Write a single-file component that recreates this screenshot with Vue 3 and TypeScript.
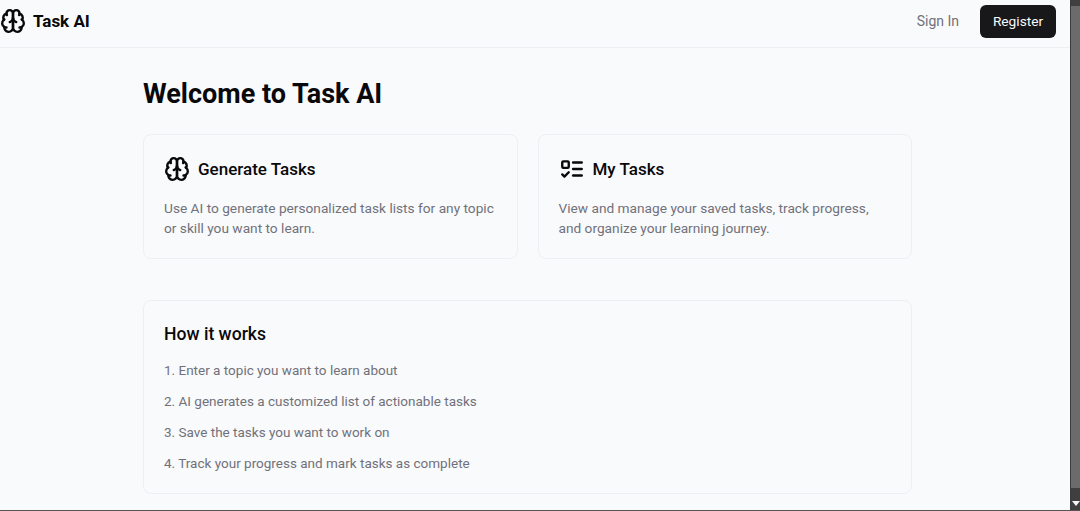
<template>
  <div class="window">
    <div class="viewport">
      <div class="page">
        <header class="topbar">
          <div class="brand">
            <svg class="icon" viewBox="0 0 24 24"><path v-for="d in brainPaths" :key="d" :d="d" /></svg>
            <span class="brand-name">Task AI</span>
          </div>
          <nav class="nav">
            <a class="signin">Sign In</a>
            <button class="register">Register</button>
          </nav>
        </header>

        <main class="content">
          <h1>Welcome to Task AI</h1>

          <div class="cards">
            <section class="card">
              <div class="card-title">
                <svg class="icon" viewBox="0 0 24 24"><path v-for="d in brainPaths" :key="d" :d="d" /></svg>
                <h2>Generate Tasks</h2>
              </div>
              <p>Use AI to generate personalized task lists for any topic or skill you want to learn.</p>
            </section>
            <section class="card">
              <div class="card-title">
                <svg class="icon" viewBox="0 0 24 24">
                  <rect x="3" y="5" width="6" height="6" rx="1" />
                  <path d="m3 17 2 2 4-4" />
                  <path d="M13 6h8" />
                  <path d="M13 12h8" />
                  <path d="M13 18h8" />
                </svg>
                <h2>My Tasks</h2>
              </div>
              <p>View and manage your saved tasks, track progress, and organize your learning journey.</p>
            </section>
          </div>

          <section class="card how">
            <h2>How it works</h2>
            <ol>
              <li v-for="(step, i) in steps" :key="step">{{ i + 1 }}. {{ step }}</li>
            </ol>
          </section>
        </main>
      </div>

      <div class="scrollbar">
        <span class="thumb"></span>
        <span class="arrow-box"><span class="arrow"></span></span>
      </div>
    </div>
    <div class="window-edge"></div>
  </div>
</template>

<script setup lang="ts">
const brainPaths: string[] = [
  'M12 5a3 3 0 1 0-5.997.125 4 4 0 0 0-2.526 5.77 4 4 0 0 0 .556 6.588A4 4 0 1 0 12 18Z',
  'M12 5a3 3 0 1 1 5.997.125 4 4 0 0 1 2.526 5.77 4 4 0 0 1-.556 6.588A4 4 0 1 1 12 18Z',
  'M15 13a4.5 4.5 0 0 1-3-4 4.5 4.5 0 0 1-3 4',
  'M17.599 6.5a3 3 0 0 0 .399-1.375',
  'M6.003 5.125A3 3 0 0 0 6.401 6.5',
  'M3.477 10.896a4 4 0 0 1 .585-.396',
  'M19.938 10.5a4 4 0 0 1 .585.396',
  'M6 18a4 4 0 0 1-1.967-.516',
  'M19.967 17.484A4 4 0 0 1 18 18',
]

const steps: string[] = [
  'Enter a topic you want to learn about',
  'AI generates a customized list of actionable tasks',
  'Save the tasks you want to work on',
  'Track your progress and mark tasks as complete',
]
</script>

<style>
html,
body {
  margin: 0;
  overflow: hidden;
}
</style>

<style scoped>
.window {
  display: flex;
  flex-direction: column;
  width: 1080px;
  height: 511px;
  overflow: hidden;
  background: #f9fafc;
  font-family: Roboto, 'Noto Sans', sans-serif;
  color: #09090b;
}

.viewport {
  display: flex;
  flex: 1;
  min-height: 0;
}

.window-edge {
  height: 1px;
  background: #555;
}

.page {
  flex: 1;
  min-width: 0;
}

.topbar {
  display: flex;
  align-items: center;
  justify-content: space-between;
  height: 47px;
  padding-right: 14px;
  border-bottom: 1px solid #eeeff2;
}

.brand {
  display: flex;
  align-items: center;
  gap: 7px;
  margin-top: -5px;
}

.brand-name {
  font-size: 17px;
  font-weight: 700;
}

.icon {
  width: 26px;
  height: 26px;
  flex: none;
  fill: none;
  stroke: #09090b;
  stroke-width: 2.2;
  stroke-linecap: round;
  stroke-linejoin: round;
}

.nav {
  display: flex;
  align-items: center;
  gap: 21px;
  margin-top: -5px;
}

.signin {
  font-size: 14px;
  color: #71717a;
}

.register {
  height: 33px;
  width: 76px;
  padding: 0;
  border: none;
  border-radius: 6px;
  background: #18181b;
  color: #fafafa;
  font-family: inherit;
  font-size: 13.7px;
}

.content {
  width: 769px;
  margin-left: 143px;
  padding-top: 25px;
}

h1 {
  margin: 0 0 19px;
  font-size: 27px;
  line-height: 42px;
  font-weight: 700;
}

.cards {
  display: grid;
  grid-template-columns: 1fr 1fr;
  gap: 20px;
  margin-bottom: 41px;
}

.card {
  box-sizing: border-box;
  padding: 21px 20px 20px;
  border: 1px solid #eeeff2;
  border-radius: 8px;
}

.card-title {
  display: flex;
  align-items: center;
  gap: 8px;
  margin-bottom: 16px;
}

h2 {
  margin: 0;
  font-size: 17px;
  font-weight: 500;
}

.card p {
  margin: 0;
  font-size: 13.7px;
  line-height: 20px;
  color: #71717a;
}

.how {
  height: 194px;
  padding-top: 19px;
}

.how h2 {
  font-size: 17.6px;
  line-height: 28px;
}

ol {
  list-style: none;
  margin: 12px 0 0;
  padding: 0;
  display: flex;
  flex-direction: column;
  gap: 11px;
  font-size: 13.5px;
  line-height: 20px;
  color: #71717a;
}

.scrollbar {
  display: flex;
  flex-direction: column;
  width: 9px;
  border-left: 1px solid #3c3c3c;
  background: #3f3f3f;
}

.thumb {
  flex: 1;
  margin-top: 6px;
  background: #6b6b6b;
}

.arrow-box {
  display: flex;
  align-items: center;
  justify-content: center;
  height: 22px;
}

.arrow {
  margin-top: 8px;
  border-left: 4px solid transparent;
  border-right: 4px solid transparent;
  border-top: 5px solid #f5f5f5;
}
</style>
